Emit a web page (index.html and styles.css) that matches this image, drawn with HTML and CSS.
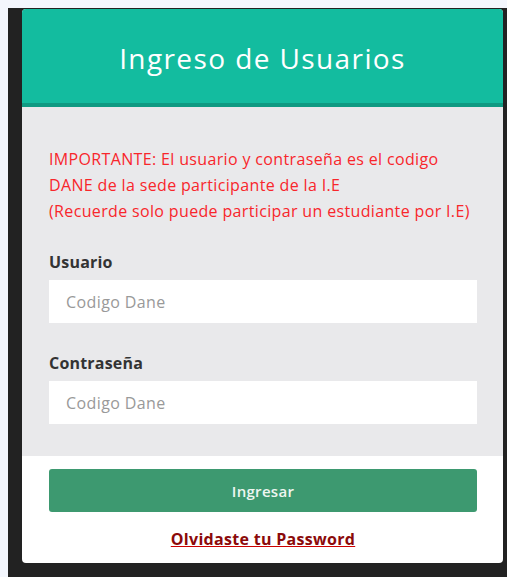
FILE: index.html
```html
<!DOCTYPE html>
<html lang="es">
<head>
<meta charset="utf-8">
<title>Ingreso de Usuarios</title>
<link rel="stylesheet" href="styles.css">
</head>
<body>
<div class="backdrop">
  <div class="login-card">
    <div class="login-head">
      <h1 class="login-title">Ingreso de Usuarios</h1>
    </div>
    <form class="login-body">
      <p class="notice">IMPORTANTE: El usuario y contraseña es el codigo<br>DANE de la sede participante de la I.E<br>(Recuerde solo puede participar un estudiante por I.E)</p>
      <label class="field-label" for="usuario">Usuario</label>
      <input class="field-input" id="usuario" type="text" placeholder="Codigo Dane">
      <label class="field-label second" for="clave">Contraseña</label>
      <input class="field-input" id="clave" type="password" placeholder="Codigo Dane">
    </form>
    <div class="login-foot">
      <button class="btn-submit" type="button">Ingresar</button>
      <a class="forgot" href="#">Olvidaste tu Password</a>
    </div>
  </div>
</div>
</body>
</html>
```

FILE: styles.css
```css
html, body {
  height: 100%;
}
body {
  margin: 8px 0 0 8px;
  background: #f3f6fd;
  font-family: "Open Sans", "Noto Sans", sans-serif;
  overflow: hidden;
}
.backdrop {
  background: #222;
  height: calc(100% - 8px);
  padding: 1px 4px 0 14px;
  box-sizing: border-box;
}
.login-card {
  background: #fff;
  border-radius: 4px;
  overflow: hidden;
  height: 554px;
  display: flex;
  flex-direction: column;
}
.login-head {
  background: #13bc9f;
  border-bottom: 4px solid #0f9a82;
  height: 94px;
  display: flex;
  align-items: center;
  justify-content: center;
}
.login-title {
  margin: 0;
  color: #fff;
  font-weight: 400;
  font-size: 28px;
  letter-spacing: 1.4px;
  padding-top: 4px;
}
.login-body {
  background: #e9e9eb;
  padding: 39px 26px 32px 27px;
  display: flex;
  flex-direction: column;
  margin: 0;
}
.notice {
  margin: 0 0 28px;
  color: #f8262b;
  font-size: 16px;
  letter-spacing: 0.35px;
  line-height: 26px;
  white-space: nowrap;
}
.field-label {
  color: #333;
  font-weight: 700;
  font-size: 16px;
  letter-spacing: 0.2px;
  line-height: 20px;
  margin-bottom: 8px;
}
.field-label.second {
  margin-top: 30px;
}
.field-input {
  height: 43px;
  border: 0;
  padding: 0 17px;
  font-family: inherit;
  font-size: 16px;
  letter-spacing: 0.4px;
  background: #fff;
  outline: none;
}
.field-input::placeholder {
  color: #999;
}
.login-foot {
  padding: 13px 26px 0 27px;
  display: flex;
  flex-direction: column;
  align-items: stretch;
}
.btn-submit {
  height: 43px;
  border: 0;
  border-radius: 3px;
  background: #3d9970;
  color: #eef6f0;
  font-family: inherit;
  font-size: 15px;
  letter-spacing: 0.3px;
  font-weight: 600;
}
.forgot {
  align-self: center;
  margin-top: 16px;
  color: #8b0a0a;
  font-weight: 700;
  font-size: 16px;
  letter-spacing: 0.3px;
  text-decoration-color: #c00;
}
```
